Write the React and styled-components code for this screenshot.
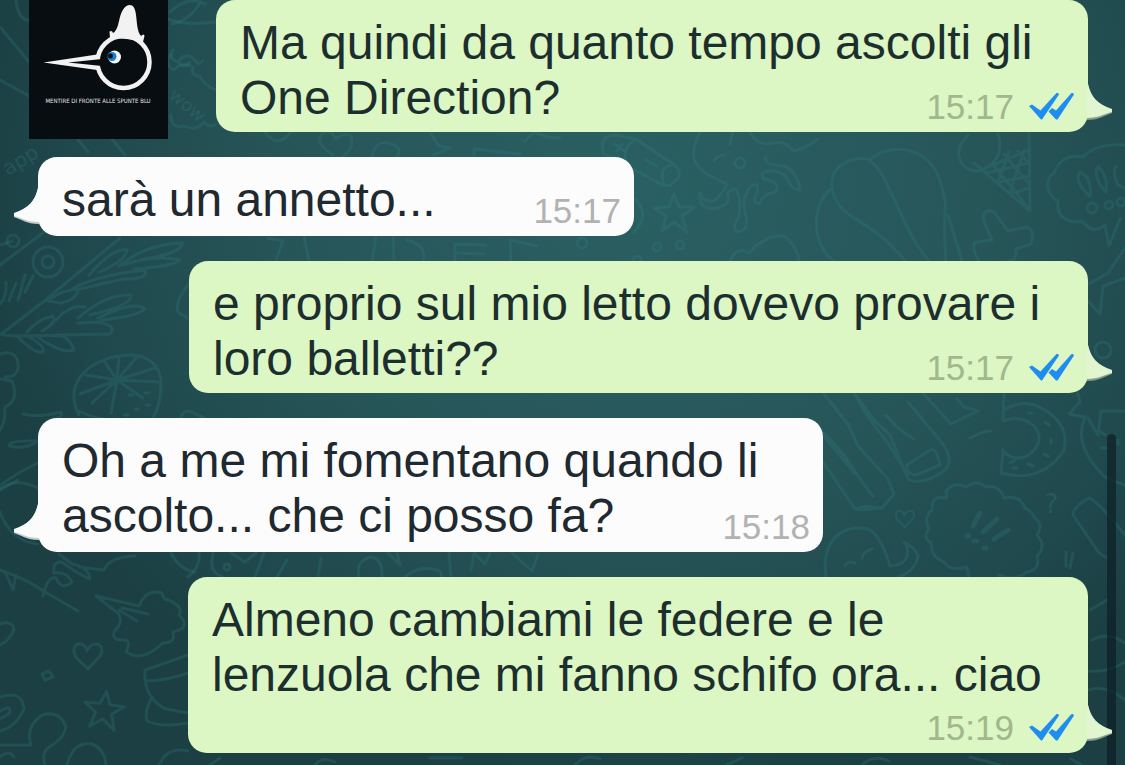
import React from 'react';
import styled, { createGlobalStyle } from 'styled-components';

const GlobalStyle = createGlobalStyle`
  * { box-sizing: border-box; }
  body { margin: 0; background: #1d4145; }
`;

const Screen = styled.main`
  position: relative;
  min-height: 100vh;
  overflow: hidden;
  background: radial-gradient(ellipse 60% 80% at 57% 24%, #2a6063 0%, #275659 50%, #1f484c 85%, #1b3f43 100%);
  font-family: 'Liberation Sans', Arial, sans-serif;
`;

const Wallpaper = styled.svg`
  position: absolute;
  inset: 0;
  width: 100%;
  height: 100%;
`;

const Watermark = styled.figure`
  position: absolute;
  top: 0;
  left: 29px;
  width: 139px;
  height: 139px;
  margin: 0;
  background: #080d11;
  svg { display: block; }
`;

const Thread = styled.ol`
  position: relative;
  display: flex;
  flex-direction: column;
  gap: 25px;
  margin: 0;
  padding: 0 37px 11px 38px;
  list-style: none;
`;

const Row = styled.li`
  display: flex;
  justify-content: ${p => (p.$mine ? 'flex-end' : 'flex-start')};
`;

const Bubble = styled.article`
  position: relative;
  display: grid;
  flex: 0 1 ${p => p.$width}px;
  min-width: 0;
  border-radius: 19px;
  background: ${p => (p.$mine ? '#dcf6c4' : '#fcfcfc')};
`;

const Message = styled.p`
  grid-area: 1 / 1;
  margin: 0;
  padding: 15px 24px ${p => (p.$ownMetaLine ? 51 : p.$mine ? 7 : 9)}px;
  font-size: 48px;
  line-height: 55px;
  white-space: nowrap;
  color: ${p => (p.$mine ? '#1c2f2e' : '#20292f')};
`;

const Meta = styled.footer`
  grid-area: 1 / 1;
  align-self: end;
  justify-self: end;
  display: flex;
  align-items: center;
  gap: 15px;
  padding: 0 13px 5px 0;
  font-size: 35px;
  line-height: 40px;
  color: ${p => (p.$mine ? '#a2b78d' : '#b2b2b2')};
`;

const TailShape = styled.svg`
  position: absolute;
  bottom: 6px;
  ${p => (p.$mine ? 'left: 100%; margin-left: -1px;' : 'right: 100%; margin-right: -1px; transform: scaleX(-1);')}
`;

const ScrollThumb = styled.div`
  position: absolute;
  top: 434px;
  bottom: 0;
  right: 9px;
  width: 9px;
  border-radius: 5px 5px 0 0;
  background: rgba(12, 32, 38, 0.72);
`;

const messages = [
  { mine: true, width: 872, lines: ['Ma quindi da quanto tempo ascolti gli', 'One Direction?'], time: '15:17' },
  { mine: false, width: 596, lines: ['sarà un annetto...'], time: '15:17' },
  { mine: true, width: 899, lines: ['e proprio sul mio letto dovevo provare i', 'loro balletti??'], time: '15:17' },
  { mine: false, width: 785, lines: ['Oh a me mi fomentano quando li', 'ascolto... che ci posso fa?'], time: '15:18' },
  { mine: true, width: 900, lines: ['Almeno cambiami le federe e le', 'lenzuola che mi fanno schifo ora... ciao'], time: '15:19', ownMetaLine: true },
];

function Tail({ mine }) {
  return (
    <TailShape $mine={mine} width="27" height="42" viewBox="0 0 27 42" aria-hidden="true">
      <path d="M0 0 H1 C4 13 10 20 25 26 V29 C18 31 13 36 0 36Z" fill={mine ? '#8c9d8b' : '#c4cdcd'} />
      <path d="M0 0 H1 C4 13 10 20 25 25 V28 C17 30 11 34 0 34Z" fill={mine ? '#e2f5d1' : '#fafcfc'} />
    </TailShape>
  );
}

function Ticks() {
  return (
    <svg width="46" height="28" viewBox="0 0 46 28" fill="#1f8df0" role="img" aria-label="Letto">
      <path d="M0 13 L3 11.5 L11.5 17.5 L27.5 0 H29 L30 1.5 L13 26.5 H12Z" />
      <path d="M19.500 18.500 L23 15 L27 17.500 L42.500 0 H44 L45 1.500 L28.500 26.500 H27Z" />
    </svg>
  );
}

function PinocchioLogo() {
  return (
    <svg width="139" height="139" viewBox="0 0 139 139" role="img" aria-label="Mentire di fronte alle spunte blu">
      <circle cx="94.500" cy="62" r="26" fill="#080d11" stroke="#f2f2f2" strokeWidth="4.500" />
      <path d="M14.500 62.500 L68 54.500 L71 59 V66 L68 70Z" fill="#f2f2f2" />
      <path d="M39 62.500 L73 59 V66Z" fill="#080d11" />
      <path d="M80.500 31.500 Q83 30 84 33 Q88 31 90 21 C92 12 95 5 101 5 C107 5 107 15 108 24 Q109 33 112 36 Q115 33 115.500 36 L114 42 Q98 38 81 38Z" fill="#f2f2f2" />
      <circle cx="85.500" cy="57" r="6.500" fill="#f7f7f7" />
      <circle cx="83" cy="56.500" r="4.500" fill="#1683cf" />
      <circle cx="81.500" cy="56" r="2.500" fill="#0a1014" />
      <text x="69" y="103" textAnchor="middle" fontFamily="'Liberation Sans Narrow', 'DejaVu Sans Condensed', sans-serif" fontSize="6" fill="#e6e6e6">MENTIRE DI FRONTE ALLE SPUNTE BLU</text>
    </svg>
  );
}

const star = 'M0 -19 L5 -6 L20 -6 L8 3 L13 19 L0 9 L-12 18 L-8 3 L-20 -5 L-5 -6Z';
const heart = 'M0 14 C-8 6 -15 2 -14 -6 C-12 -14 -3 -12 -1 -4 C3 -13 13 -13 14 -5 C15 1 6 6 0 14Z';

function Doodles() {
  return (
    <Wallpaper viewBox="0 0 1125 765" preserveAspectRatio="xMidYMid slice" aria-hidden="true"
      fill="none" stroke="#34807f" strokeOpacity="0.26" strokeWidth="3" strokeLinejoin="round" strokeLinecap="round">
      {/* edge beside the logo: branch lines, ribbon and thought cloud */}
      <path d="M0 27 L29 62 M0 80 L29 96 M16 0 Q18 20 29 20 M78 140 L88 152 M112 139 L125 155 M170 12 Q190 -6 205 4 M172 24 Q190 20 200 3 M173 50 Q168 59 178 62 Q185 52 193 58 L198 64 L203 61 M178 62 Q184 70 190 62" />
      <path d="M168 19 Q185 26 216 22 M171 54 Q163 64 174 70 Q182 60 193 67 Q190 76 200 76 Q204 86 216 90 M171 115 Q171 129 184 126 Q196 132 204 122 Q211 129 216 124" />
      <g fill="#39807f" fillOpacity="0.3" stroke="none" fontFamily="'DejaVu Sans', sans-serif">
        <text x="8" y="176" fontSize="20" transform="rotate(-32 8 176)">app</text>
        <text x="168" y="97" fontSize="18" transform="rotate(40 168 97)">wow</text>
        <text x="1044" y="513" fontSize="27">?</text>
      </g>
      {/* strip above the first reply */}
      <path d="M265 132 Q278 150 291 132 M333 155 Q313 142 323 133 Q333 129 335 139 Q344 132 351 136 Q355 148 342 157 M372 156 Q377 138 391 144 Q403 147 397 157 M431 134 L439 146 L450 148 L434 155 M474 155 V149 L520 154 M525 141 L534 132 L547 137 L560 138" />
      {/* battery */}
      <path d="M604 154 Q598 136 615 135 L636 139 L676 166 Q685 176 670 185 Q663 187 657 182 L607 155 M635 140 Q622 147 626 164 M671 165 Q658 168 664 185 M646 160 L657 166 M615 144 L624 151 M622 144 L617 151" />
      <path d={star} transform="translate(674 213)" />
      <circle cx="657" cy="247" r="4" /><circle cx="680" cy="245" r="4" />
      {/* octopus */}
      <path d="M700 132 C684 163 698 171 727 184 Q724 192 714 201 Q703 203 700 193 Q698 211 717 208 Q732 204 727 194 M750 132 Q758 147 774 143 Q785 140 793 151 Q805 149 818 139 M727 194 Q736 184 738 194 Q742 207 738 218 Q731 229 738 232 Q749 230 746 216 Q740 199 751 186 Q760 181 757 193 Q751 203 760 204 Q762 194 775 192 Q783 183 764 179 Q758 171 772 171 Q785 171 790 184 Q795 191 800 190 Q797 171 784 166 Q762 165 766 157 M714 161 Q717 155 724 155 M733 132 L730 144" />
      <circle cx="740" cy="163" r="5" />
      {/* parachute */}
      <path d="M834 261 C815 249 807 207 832 188 C829 162 859 155 869 160 C899 138 932 153 940 181 Q947 201 945 212 Q944 235 946 261 M832 188 C838 222 869 215 905 261 M869 160 C889 172 902 232 929 261 M948 215 Q956 241 962 261" />
      {/* ice-cream cone */}
      <path d="M968 135 Q953 150 962 164 Q975 178 992 164 Q1004 151 998 134 M974 163 L1030 211 L1029 132 M993 165 L1029 150 M987 173 L1028 163 M1000 182 L1029 176 M1011 194 L1029 188 M993 165 L1027 206 M1004 154 L1029 184 M1018 151 L1029 164 M1009 152 L998 182 M1024 150 L1010 193" />
      {/* puzzle piece */}
      <path d="M979 261 Q970 246 976 242 L992 240 Q985 226 983 216 Q987 208 994 212 L1008 231 L1027 227 Q1036 231 1031 244 L1016 249 Q1017 260 1010 261" />
      {/* exclamation cloud */}
      <path d="M1054 173 Q1062 153 1083 157 Q1096 143 1125 145 M1054 173 Q1045 178 1049 192 Q1054 200 1058 201 Q1056 220 1075 222 Q1082 220 1085 224 Q1093 234 1105 225 L1109 246 L1120 219 M1080 172 Q1075 177 1082 188 L1090 197 Q1092 187 1087 177 L1080 172 M1098 166 Q1094 172 1100 185 L1106 192 Q1109 178 1098 166 M1116 166 Q1112 172 1118 185 L1124 188" />
      <circle cx="1092" cy="208" r="5" /><circle cx="1109" cy="205" r="4" /><circle cx="1121" cy="202" r="4" />
      <path d="M1125 248 L1108 273 L1089 284 M1088 301 L1100 314 L1103 286 L1125 278" />
      <circle cx="1103" cy="350" r="8" />
      {/* strip between the first reply and the next message */}
      <path d="M268 238 L283 241 L276 260 M304 237 L309 261 M376 236 L372 261 M393 236 L394 261 M407 240 Q428 246 423 261 M455 261 V244 L486 245 M456 253 L484 254 M511 261 L510 240 L537 246 M632 196 Q652 213 634 232 M730 261 Q736 246 749 253 Q766 234 783 236 Q796 243 799 261" />
      <circle cx="582" cy="243" r="5" /><circle cx="637" cy="260" r="4" /><circle cx="13" cy="241" r="6" />
      {/* olive branches */}
      <path d="M0 335 L43 302 L120 238 M3 335 L15 336 L110 334 Q118 326 98 322 L78 323 M0 265 L44 232 M0 245 L12 241 M16 335 Q34 354 43 352 Q45 345 27 336 M38 337 Q61 354 74 350 Q68 334 56 336 M27 332 Q38 319 53 316 Q57 323 42 331 M56 320 Q70 304 85 307 M78 318 Q105 294 131 295 Q133 305 90 315 M98 318 Q135 300 145 309 Q139 316 101 320 M48 301 Q61 290 78 289 Q78 299 61 303 L48 301 M69 291 Q91 276 145 270 Q148 280 123 279 L80 289 M89 275 Q113 247 127 250 Q126 260 100 272 M119 266 Q147 243 183 243 Q180 254 143 259 M123 265 Q154 254 180 260 Q175 266 134 269" />
      <circle cx="48" cy="262" r="15" /><circle cx="48" cy="262" r="6" />
      <path d="M0 304 Q7 297 6 282 M9 301 L16 283 M18 300 L25 275 M25 292 L33 276" />
      <path d="M189 284 Q174 302 178 312 L187 318 M0 354 Q13 350 17 359 Q22 377 5 377 M0 379 L12 381 Q20 400 5 407 Q5 424 0 430 M38 488 Q15 477 0 489 M38 463 Q22 470 0 485 M38 441 Q26 450 9 446 Q10 440 38 441" />
      {/* citrus slice */}
      <path d="M79 415 C60 379 97 354 133 355 Q157 357 161 380 Q162 402 153 418 M79 411 Q98 421 120 420 M117 380 L80 394 M117 380 L86 375 M117 380 L104 361 M117 380 L119 356 M117 380 L137 357 M117 380 L155 368 M117 380 L158 382 M117 380 L143 398 M117 380 L92 403 M117 380 L111 413" />
      <path d="M129 395 h4 M145 393 h4 M135 409 h3 M146 405 h4 M124 415 h4 M23 414 Q39 418 61 412 Q65 418 48 420 M181 417 Q184 409 192 412 Q199 416 204 418" />
      {/* bacon and album */}
      <path d="M823 393 C839 412 852 427 857 445 L888 479 L894 494 L882 508 L858 510 L855 509 M823 435 L855 474 M823 462 L855 509 L866 506 L882 508 M836 410 L850 426 M854 393 L875 421 L890 435 L908 479 Q922 487 945 470 Q956 458 938 438 L908 402 M886 415 Q898 430 914 439 M855 394 C869 425 887 437 895 455 L908 475 M907 465 L930 450 Q936 446 940 465 L916 475 Q906 474 907 465 M823 432 C850 457 858 480 873 496 M923 393 L951 424 L978 411 L964 407 L957 399 M970 438 L983 432 L991 431" />
      <path d={heart} transform="translate(905 518) scale(0.650)" />
      {/* doughnut and strawberry */}
      <path d="M1004 394 L1003 421 Q1021 414 1035 427 Q1046 443 1027 456 Q1011 462 1003 450 L1001 473 Q1042 484 1064 450 Q1070 426 1045 410 Q1025 397 1004 410 M1013 468 h4 M1028 464 l5 2 M1044 454 l4 2 M1051 439 v4 M1045 422 l4 3 M1028 413 h4 M1010 463 l5 -3" />
      <path d="M1069 414 L1080 402 L1077 390 M1069 414 L1085 417 Q1072 446 1106 478 L1125 485 M1088 418 L1098 435 L1101 411 L1125 411 M1101 432 l4 3 M1101 448 h5 M1118 440 v4" />
      {/* bush with face */}
      <path d="M946 491 Q954 481 966 487 Q977 479 986 487 Q999 484 1004 498 Q1019 494 1025 508 Q1032 512 1035 518 Q1044 525 1037 535 Q1047 547 1037 556 Q1041 570 1026 572 Q1016 582 999 575 M946 491 Q948 498 945 498 Q931 495 932 510 Q923 517 929 529 Q922 537 931 543 Q931 557 944 562 Q950 572 967 567 L969 578" />
      <path d="M973 526 L980 513 M983 532 L997 519 M994 539 L1008 530 M967 536 h2 M974 541 h3 M984 548 h2" strokeWidth="5" />
      <path d="M826 577 C821 544 839 523 868 529 Q881 535 890 566 Q910 565 907 548 Q906 542 904 542 Q916 548 918 557 Q915 571 899 577 M845 566 Q848 560 855 563 M862 558 Q864 551 872 549 M1073 515 Q1073 507 1089 498 Q1096 499 1125 535 M1073 515 L1099 553 L1107 558 M1066 552 v14 M1073 553 L1070 568" />
      {/* strip above the last message */}
      <path d="M188 577 Q201 566 199 553 M213 553 Q208 573 223 577 M231 553 L245 562 L256 553 M264 553 L255 577 M287 560 L277 577 M321 558 L318 577 M359 577 Q355 560 372 557 Q383 560 382 577 M388 553 L400 565 L397 553 M405 577 Q420 564 440 571 L442 577 M449 553 L451 577 M471 570 L474 553 L485 564 L490 553 M512 553 L532 571 L538 555" />
      <circle cx="227" cy="567" r="3" />
      {/* pen, flower, star, cup */}
      <path d="M0 570 Q28 580 45 592 L78 611 M5 572 L13 590 L16 575 M43 596 Q48 575 56 578 Q61 591 72 582 Q67 571 54 573 Q52 561 62 562 Q78 574 90 579 Q89 567 72 564 L59 554 M79 567 L104 570 Q109 557 135 556 M171 553 Q180 570 195 572 M0 512 Q11 542 38 544 M0 490 L18 480" />
      <path d="M96 596 L139 606 Q146 588 162 593 Q163 600 168 600 Q184 606 179 615 Q192 628 173 632 Q176 643 163 643 Q142 663 126 652 Q132 640 123 640 Q110 640 115 630 Q123 624 119 614 L96 596 M119 610 L137 621 M122 608 L148 614" />
      <path d={heart} transform="translate(88 655)" />
      <path d={star} transform="translate(104 710) rotate(8)" />
      <path d="M0 624 Q13 620 14 630 Q9 641 0 645 M42 674 L49 671 L53 677 L45 680Z M0 697 Q23 690 24 709 Q16 727 0 731 M0 711 Q11 704 10 713 L0 719 M0 745 L31 745 Q25 727 42 715 Q60 710 66 727 Q63 740 49 747 Q41 753 45 765 M67 765 Q73 741 92 744 Q105 749 106 765 M188 655 L145 670 Q143 698 166 709 L188 713 M146 681 Q165 681 188 673 M152 697 Q144 712 147 721 Q163 728 188 723 M159 765 Q167 746 188 751 M0 757 Q9 749 14 757" />
      <path d="M210 765 L220 758 M315 765 Q322 756 335 762 M430 758 H462 M575 765 Q586 753 600 759 M726 765 L742 758 M862 765 Q875 754 889 761 M970 757 L1000 765 M1071 759 L1082 765 M1092 640 Q1108 631 1125 643 M1090 610 L1107 600 M1089 671 Q1107 673 1125 662 M1089 690 Q1105 684 1125 700" />
    </Wallpaper>
  );
}

export default function App() {
  return (
    <Screen>
      <GlobalStyle />
      <Doodles />
      <ScrollThumb />
      <Thread>
        {messages.map((m, i) => (
          <Row key={i} $mine={m.mine}>
            <Bubble $mine={m.mine} $width={m.width}>
              <Tail mine={m.mine} />
              <Message $mine={m.mine} $ownMetaLine={m.ownMetaLine}>
                {m.lines.map((line, n) => (
                  <React.Fragment key={line}>{n > 0 && <br />}{line}</React.Fragment>
                ))}
              </Message>
              <Meta $mine={m.mine}>
                <time>{m.time}</time>
                {m.mine && <Ticks />}
              </Meta>
            </Bubble>
          </Row>
        ))}
      </Thread>
      <Watermark><PinocchioLogo /></Watermark>
    </Screen>
  );
}
